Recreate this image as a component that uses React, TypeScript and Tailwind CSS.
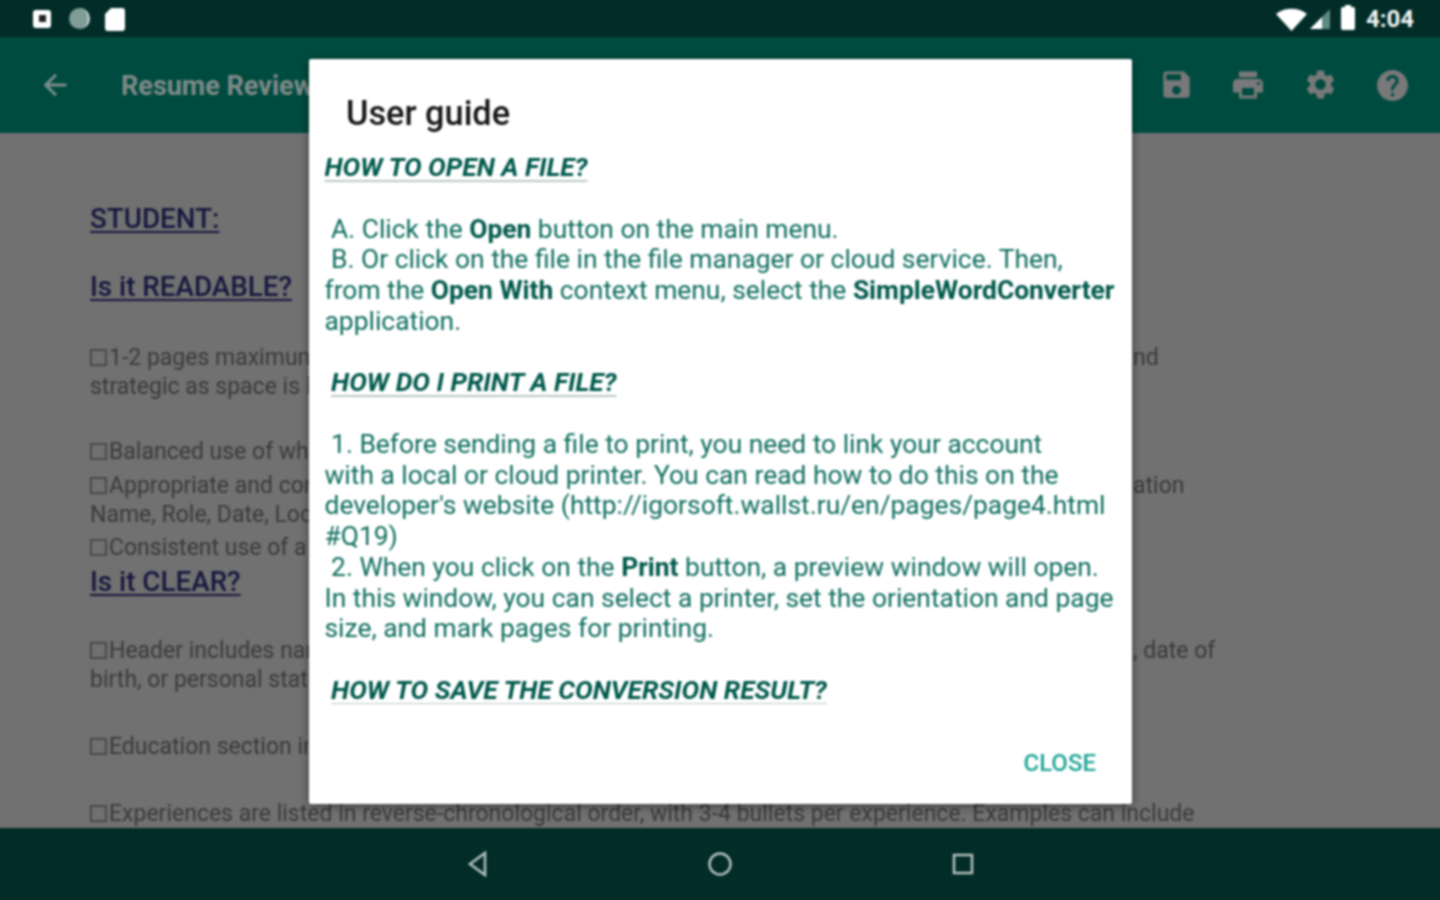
import { MdArrowBack, MdSave, MdPrint, MdSettings, MdHelp } from 'react-icons/md';

function Check() {
  return <span className="inline-block w-[17px] h-[17px] border-2 border-[#4a4a4a] mr-[2px] align-[-1px]" />;
}

function Row({ className = '', right, children }: { className?: string; right?: string; children: React.ReactNode }) {
  return (
    <div className={`grid grid-cols-[1043px_auto] h-[29px] leading-[29px] whitespace-nowrap ${className}`}>
      <div className="overflow-hidden">{children}</div>
      <div>{right}</div>
    </div>
  );
}

function DocHeading({ className = '', children }: { className?: string; children: React.ReactNode }) {
  return <div className={`h-[34px] leading-[34px] text-[27.8px] font-medium text-[#17173f] underline underline-offset-[3px] ${className}`}>{children}</div>;
}

function ToolIcon({ children }: { children: React.ReactNode }) {
  return <div className="w-[72px] flex justify-center text-[#797979]">{children}</div>;
}

function GuideHeading({ children }: { children: React.ReactNode }) {
  return <span className="font-bold italic text-[#00594c] underline decoration-[#b9c9c5] underline-offset-[4px]">{children}</span>;
}

function Strong({ children }: { children: React.ReactNode }) {
  return <b className="font-bold text-[#00594c]">{children}</b>;
}

export default function App() {
  return (
    <div className="relative h-screen w-screen overflow-hidden bg-[#717171]">
      {/* inner page runs 4px past the window so the soft filter doesn't fade at the edges */}
      <div className="relative -m-[4px] w-[1448px] h-[908px] flex flex-col font-['Roboto',sans-serif] blur-[0.8px]">
        {/* status bar */}
        <div className="h-[41px] shrink-0 bg-[#012c27] flex items-center pt-[4px] pl-[37px] pr-[30px]">
          <div className="w-[18px] h-[18px] bg-white rounded-[3px] flex items-center justify-center">
            <div className="w-[7px] h-[7px] bg-[#222]" />
          </div>
          <div className="w-[21px] h-[21px] rounded-full bg-[#7f9c97] border-r-2 border-[#d7e0de] ml-[18px]" />
          <svg className="ml-[14px]" width="22" height="24" viewBox="0 0 22 24">
            <path d="M7 1h11a3 3 0 0 1 3 3v17a3 3 0 0 1-3 3H4a3 3 0 0 1-3-3V7z" fill="#fff" />
          </svg>
          <div className="ml-auto flex items-center">
            <svg width="33" height="24" viewBox="0 0 33 24">
              <path d="M1 7C9 0 24 0 32 7L16.500 24z" fill="#fff" />
            </svg>
            <svg className="ml-[1px]" width="22" height="22" viewBox="0 0 22 22">
              <path d="M21 1v20H1z" fill="#5f8a83" />
              <path d="M13 9v12H1z" fill="#fff" />
            </svg>
            <div className="ml-[10px] w-[14px] h-[23px] bg-white rounded-[2px] relative">
              <div className="absolute -top-[2px] left-[4px] w-[6px] h-[3px] bg-white" />
            </div>
            <span className="ml-[11px] text-[24px] font-bold text-[#f1f4f3] leading-none">4:04</span>
          </div>
        </div>

        {/* toolbar */}
        <div className="h-[96px] shrink-0 bg-[#004b40] flex items-center pl-[42px] pr-[16px]">
          <MdArrowBack size={34} className="text-[#7d8f8b]" />
          <span className="ml-[49px] mt-[2px] text-[27px] font-bold text-[#7f8b88]">Resume Review</span>
          <div className="ml-auto flex">
            <ToolIcon><MdSave size={35} /></ToolIcon>
            <ToolIcon><MdPrint size={36} /></ToolIcon>
            <ToolIcon><MdSettings size={35} /></ToolIcon>
            <ToolIcon><MdHelp size={37} /></ToolIcon>
          </div>
        </div>

        {/* document behind the dialog */}
        <div className="flex-1 overflow-hidden pl-[94px] pt-[69px] text-[23px] text-[#3a3a3a] min-h-0">
          <DocHeading>STUDENT:</DocHeading>
          <DocHeading className="mt-[34px]">Is it READABLE?</DocHeading>
          <Row className="mt-[39px]" right="nd"><Check />1-2 pages maximum</Row>
          <Row>strategic as space is limited</Row>
          <Row className="mt-[36px]"><Check />Balanced use of white space</Row>
          <Row className="mt-[5px]" right="ation"><Check />Appropriate and consistent</Row>
          <Row>Name, Role, Date, Location</Row>
          <Row className="mt-[4px]"><Check />Consistent use of a font</Row>
          <DocHeading className="mt-[3px]">Is it CLEAR?</DocHeading>
          <Row className="mt-[37px]" right=", date of"><Check />Header includes name</Row>
          <Row>birth, or personal statement</Row>
          <Row className="mt-[38px]"><Check />Education section includes</Row>
          <div className="mt-[38px] h-[29px] leading-[29px] whitespace-nowrap">
            <Check />Experiences are listed in reverse-chronological order, with 3-4 bullets per experience. Examples can include
          </div>
        </div>

        {/* nav bar */}
        <div className="h-[76px] shrink-0 bg-[#012c27] flex items-center justify-center gap-[207px] pb-[4px] text-[#b4c0bd]">
          <svg width="46" height="28" viewBox="0 0 46 28" fill="none" stroke="currentColor" strokeWidth="2.5">
            <path d="M31 3v22L16 14z" />
          </svg>
          <svg width="26" height="26" viewBox="0 0 26 26" fill="none" stroke="currentColor" strokeWidth="2.5">
            <circle cx="13" cy="13" r="10.5" />
          </svg>
          <svg width="46" height="26" viewBox="0 0 46 26" fill="none" stroke="currentColor" strokeWidth="2.5">
            <rect x="14" y="4" width="18" height="18" />
          </svg>
        </div>

        {/* user guide dialog */}
        <div className="absolute left-[313px] top-[63px] w-[823px] h-[745px] bg-white rounded-[2px] shadow-[0_2px_10px_rgba(0,0,0,0.45)] flex flex-col">
          <h2 className="pl-[37px] pt-[34px] h-[74px] leading-[40px] text-[34.3px] text-[#161616] font-medium shrink-0">User guide</h2>
          <div className="mt-[19px] pl-[15.5px] pr-[14px] flex-1 min-h-0 overflow-hidden whitespace-pre-wrap text-[26.4px] leading-[30.75px] text-[#0f6e5f]">
            <GuideHeading>HOW TO OPEN A FILE?</GuideHeading>
            {'\n\n A. Click the '}<Strong>Open</Strong>{' button on the main menu.\n B. Or click on the file in the file manager or cloud service. Then,\nfrom the '}
            <Strong>Open With</Strong>{' context menu, select the '}<Strong>SimpleWordConverter</Strong>{'\napplication.\n\n '}
            <GuideHeading>HOW DO I PRINT A FILE?</GuideHeading>
            {"\n\n 1. Before sending a file to print, you need to link your account\nwith a local or cloud printer. You can read how to do this on the\ndeveloper's website (http://igorsoft.wallst.ru/en/pages/page4.html\n#Q19)\n 2. When you click on the "}
            <Strong>Print</Strong>{' button, a preview window will open.\nIn this window, you can select a printer, set the orientation and page\nsize, and mark pages for printing.\n\n '}
            <GuideHeading>HOW TO SAVE THE CONVERSION RESULT?</GuideHeading>
          </div>
          <div className="flex justify-end pr-[36px] pb-[26px] pt-[44px] shrink-0">
            <button className="text-[24px] leading-[30px] font-medium text-[#1fa595]">CLOSE</button>
          </div>
        </div>
      </div>
    </div>
  );
}
